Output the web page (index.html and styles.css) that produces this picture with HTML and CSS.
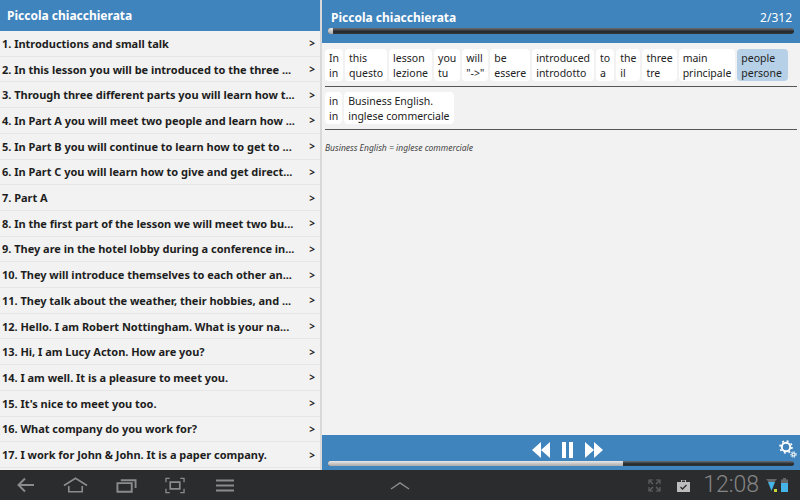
FILE: index.html
```html
<!DOCTYPE html>
<html lang="en">
<head>
<meta charset="utf-8">
<title>Piccola chiacchierata</title>
<link rel="stylesheet" href="styles.css">
</head>
<body>
<div class="app">
  <aside class="side">
    <header class="side-head">Piccola chiacchierata</header>
    <ul class="list">
      <li class="row"><span class="row-text">1. Introductions and small talk</span><span class="gt">&gt;</span></li>
      <li class="row"><span class="row-text">2. In this lesson you will be introduced to the three ...</span><span class="gt">&gt;</span></li>
      <li class="row"><span class="row-text">3. Through three different parts you will learn how t...</span><span class="gt">&gt;</span></li>
      <li class="row"><span class="row-text">4. In Part A you will meet two people and learn how ...</span><span class="gt">&gt;</span></li>
      <li class="row"><span class="row-text">5. In Part B you will continue to learn how to get to ...</span><span class="gt">&gt;</span></li>
      <li class="row"><span class="row-text">6. In Part C you will learn how to give and get direct...</span><span class="gt">&gt;</span></li>
      <li class="row"><span class="row-text">7. Part A</span><span class="gt">&gt;</span></li>
      <li class="row"><span class="row-text">8. In the first part of the lesson we will meet two bu...</span><span class="gt">&gt;</span></li>
      <li class="row"><span class="row-text">9. They are in the hotel lobby during a conference in...</span><span class="gt">&gt;</span></li>
      <li class="row"><span class="row-text">10. They will introduce themselves to each other an...</span><span class="gt">&gt;</span></li>
      <li class="row"><span class="row-text">11. They talk about the weather, their hobbies, and ...</span><span class="gt">&gt;</span></li>
      <li class="row"><span class="row-text">12. Hello. I am Robert Nottingham. What is your na...</span><span class="gt">&gt;</span></li>
      <li class="row"><span class="row-text">13. Hi, I am Lucy Acton. How are you?</span><span class="gt">&gt;</span></li>
      <li class="row"><span class="row-text">14. I am well. It is a pleasure to meet you.</span><span class="gt">&gt;</span></li>
      <li class="row"><span class="row-text">15. It's nice to meet you too.</span><span class="gt">&gt;</span></li>
      <li class="row"><span class="row-text">16. What company do you work for?</span><span class="gt">&gt;</span></li>
      <li class="row"><span class="row-text">17. I work for John &amp; John. It is a paper company.</span><span class="gt">&gt;</span></li>
    </ul>
  </aside>
  <main class="main">
    <header class="main-head">
      <div class="title-line"><span class="title">Piccola chiacchierata</span><span class="count">2/312</span></div>
      <div class="track"><div class="fill fill-top"></div></div>
    </header>
    <section class="content">
      <div class="words">
        <div class="word"><span>In</span><span>in</span></div>
        <div class="word"><span>this</span><span>questo</span></div>
        <div class="word"><span>lesson</span><span>lezione</span></div>
        <div class="word"><span>you</span><span>tu</span></div>
        <div class="word"><span>will</span><span>"-&gt;"</span></div>
        <div class="word"><span>be</span><span>essere</span></div>
        <div class="word"><span>introduced</span><span>introdotto</span></div>
        <div class="word"><span>to</span><span>a</span></div>
        <div class="word"><span>the</span><span>il</span></div>
        <div class="word"><span>three</span><span>tre</span></div>
        <div class="word"><span>main</span><span>principale</span></div>
        <div class="word active"><span>people</span><span>persone</span></div>
      </div>
      <div class="words">
        <div class="word"><span>in</span><span>in</span></div>
        <div class="word"><span>Business English.</span><span>inglese commerciale</span></div>
      </div>
      <p class="note">Business English = inglese commerciale</p>
    </section>
    <footer class="player">
      <div class="controls">
        <svg width="18" height="16" viewBox="0 0 18 16"><path d="M9 0v16L0 8zM18 0v16L9 8z" fill="#fff"/></svg>
        <svg width="11" height="16" viewBox="0 0 11 16"><path d="M0 0h4v16H0zM7 0h4v16H7z" fill="#fff"/></svg>
        <svg width="18" height="16" viewBox="0 0 18 16"><path d="M0 0v16l9-8zM9 0v16l9-8z" fill="#fff"/></svg>
      </div>
      <svg class="gear" width="18" height="18" viewBox="0 0 18 18">
        <circle cx="7" cy="7" r="4.200" fill="none" stroke="#fff" stroke-width="2"/>
        <circle cx="7" cy="7" r="6" fill="none" stroke="#fff" stroke-width="1.600" stroke-dasharray="2 2.700"/>
        <circle cx="14.500" cy="14.500" r="1.600" fill="none" stroke="#fff" stroke-width="1.200"/>
        <circle cx="14.500" cy="14.500" r="2.800" fill="none" stroke="#fff" stroke-width="1" stroke-dasharray="1.200 1.400"/>
      </svg>
      <div class="track track-bottom"><div class="fill fill-bottom"></div></div>
    </footer>
  </main>
</div>
<nav class="sysbar">
  <div class="nav-left">
    <svg width="19" height="16" viewBox="0 0 19 16"><path d="M18 8H3M9 1.500 2.500 8 9 14.500" fill="none" stroke="#8b8b8b" stroke-width="2"/></svg>
    <svg width="25" height="16" viewBox="0 0 26 16"><path d="M1 8.500 13 1l12 7.500M6 9v6h14V9" fill="none" stroke="#8b8b8b" stroke-width="1.700"/></svg>
    <svg width="21" height="15" viewBox="0 0 22 15"><path d="M1.500 5h15v9h-15zM5 2h15.500v8" fill="none" stroke="#8b8b8b" stroke-width="2"/></svg>
    <svg width="20" height="17" viewBox="0 0 21 17"><path d="M1 5V1h4M16 1h4v4M20 12v4h-4M5 16H1v-4" fill="none" stroke="#8b8b8b" stroke-width="1.400"/><path d="M5.500 5h10v7h-10z" fill="none" stroke="#8b8b8b" stroke-width="1.800"/></svg>
    <svg class="menu" width="18" height="13" viewBox="0 0 18 13"><path d="M0 1.500h18M0 6.500h18M0 11.500h18" fill="none" stroke="#8b8b8b" stroke-width="2"/></svg>
  </div>
  <svg class="nav-up" width="20" height="9" viewBox="0 0 20 9"><path d="M1 8l9-6 9 6" fill="none" stroke="#8b8b8b" stroke-width="1.500"/></svg>
  <div class="status">
    <svg width="13" height="13" viewBox="0 0 13 13"><path d="M1 5V1h4M8 1h4v4M12 8v4H8M5 12H1V8M2 2l3 3M11 2 8 5M11 11 8 8M2 11l3-3" fill="none" stroke="#626262" stroke-width="1.200"/></svg>
    <svg class="bag" width="13" height="13" viewBox="0 0 13 13"><path d="M0 3h13v10H0zM4 3V1h5v2" fill="#bdbdbd"/><path d="M5 1.500h3v1.500H5z" fill="#2b2c2e"/><path d="M3.500 8l2 2 4-4" fill="none" stroke="#2b2c2e" stroke-width="1.300"/></svg>
    <span class="clock">12:08</span>
    <svg class="wifi" width="11" height="14" viewBox="0 0 11 14"><path d="M0 1h11L8.500 4h-6z" fill="#666"/><path d="M2 4h7L5.500 13z" fill="#46b4e6"/><path d="M8 11h3v3H8z" fill="#c5d63d"/></svg>
    <svg width="7" height="14" viewBox="0 0 7 14"><path d="M2 0h3v1.500h2V14H0V1.500h2z" fill="#666"/><path d="M0 5h7v9H0z" fill="#46b4e6"/></svg>
  </div>
</nav>
</body>
</html>
```
FILE: styles.css
```css
* { box-sizing: border-box; }
html, body { margin: 0; padding: 0; }
body {
  width: 800px;
  height: 500px;
  overflow: hidden;
  display: flex;
  flex-direction: column;
  background: #2b2c2e;
  font-family: "Noto Sans", "Open Sans", sans-serif;
}
.app {
  height: 470px;
  display: flex;
  gap: 2px;
  background: #d9d9d9;
}
.side {
  width: 320px;
  display: flex;
  flex-direction: column;
  background: #f2f2f2;
}
.side-head {
  height: 31px;
  flex: none;
  padding: 0 7px;
  display: flex;
  align-items: center;
  background: #3f84bc;
  color: #fff;
  font-size: 12px;
  font-weight: 700;
}
.list {
  margin: 0;
  padding: 0 0 2px;
  list-style: none;
  flex: 1;
  display: flex;
  flex-direction: column;
}
.row {
  flex: 1;
  display: flex;
  align-items: center;
  justify-content: space-between;
  padding: 0 5px 0 2px;
  border-bottom: 1px solid #e6e6e6;
  color: #1e1e1e;
  font-size: 11px;
  font-weight: 700;
  letter-spacing: -0.02px;
  white-space: nowrap;
}
.gt { font-size: 10px; }
.main {
  flex: 1;
  display: flex;
  flex-direction: column;
  background: #f2f2f2;
}
.main-head {
  height: 43px;
  flex: none;
  padding: 7px 6px 0 6px;
  background: #3f84bc;
  color: #fff;
}
.title-line {
  display: flex;
  justify-content: space-between;
  padding: 0 2px 0 3px;
  height: 21px;
  font-size: 12px;
  line-height: 21px;
}
.title { font-weight: 700; }
.track {
  height: 6px;
  border-radius: 3px;
  background: linear-gradient(#6a7075, #24282c 60%, #33383c);
  overflow: hidden;
}
.fill {
  height: 100%;
  background: linear-gradient(#e8e8e8, #a9a9a9);
}
.fill-top { width: 5px; }
.fill-bottom { width: 295px; }
.content {
  flex: 1;
  padding: 5.500px 3px 0 3px;
}
.words {
  display: flex;
  gap: 2px;
  padding-bottom: 5px;
  margin-bottom: 4.500px;
  border-bottom: 1px solid #555;
}
.word {
  display: flex;
  flex-direction: column;
  padding: 2.500px 4px 0 4px;
  border-radius: 4px;
  background: #fff;
  color: #222;
  font-size: 10.500px;
  line-height: 15px;
  white-space: nowrap;
}
.active {
  padding-right: 6px;
  background: #b6d0e7;
}
.note {
  margin: 11.500px 0 0;
  font-size: 8.500px;
  font-style: italic;
  color: #444;
}
.player {
  position: relative;
  height: 35px;
  flex: none;
  padding: 4px 6px 0;
  background: #3f84bc;
}
.controls {
  height: 21px;
  display: flex;
  justify-content: center;
  align-items: center;
  gap: 12px;
  padding-left: 12px;
}
.gear { position: absolute; top: 5px; right: 3px; }
.track-bottom { height: 5px; margin-top: 1px; }
.sysbar {
  height: 30px;
  flex: none;
  display: flex;
  align-items: center;
  position: relative;
  padding: 0 12px 0 16px;
  justify-content: space-between;
}
.nav-left {
  display: flex;
  align-items: center;
  gap: 28px;
}
.menu { margin-left: 3px; }
.nav-up { position: absolute; left: 390px; top: 11px; }
.status {
  display: flex;
  align-items: center;
  gap: 4px;
}
.bag { margin-left: 12px; }
.clock {
  margin-left: 9px;
  color: #858585;
  font-family: "Roboto", sans-serif;
  font-weight: 300;
  font-size: 23px;
  line-height: 30px;
}
.wifi { margin-left: 3px; }
```
